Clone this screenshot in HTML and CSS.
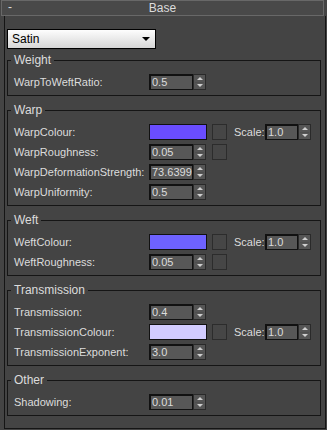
FILE: index.html
```html
<!DOCTYPE html>
<html lang="en">
<head>
  <meta charset="UTF-8" />
  <title>Base</title>
  <link rel="stylesheet" href="styles.css">
</head>
<body>
  <div class="rollout-head">
    <span class="toggle">-</span>
    <span class="title">Base</span>
  </div>
  <div class="rollout">
    <div class="dropdown">
      <span>Satin</span>
      <span class="caret"></span>
    </div>

    <div class="group">
      <span class="legend">Weight</span>
      <div class="row">
        <label>WarpToWeftRatio:</label>
        <div class="spin"><span class="field">0.5</span><span class="arrows"></span></div>
      </div>
    </div>

    <div class="group">
      <span class="legend">Warp</span>
      <div class="row">
        <label>WarpColour:</label>
        <span class="swatch" style="background:#6a4dff"></span>
        <span class="map"></span>
        <span class="scale">Scale:</span>
        <div class="spin small"><span class="field">1.0</span><span class="arrows"></span></div>
      </div>
      <div class="row">
        <label>WarpRoughness:</label>
        <div class="spin"><span class="field">0.05</span><span class="arrows"></span></div>
        <span class="map"></span>
      </div>
      <div class="row">
        <label>WarpDeformationStrength:</label>
        <div class="spin"><span class="field">73.6399</span><span class="arrows"></span></div>
      </div>
      <div class="row">
        <label>WarpUniformity:</label>
        <div class="spin"><span class="field">0.5</span><span class="arrows"></span></div>
      </div>
    </div>

    <div class="group">
      <span class="legend">Weft</span>
      <div class="row">
        <label>WeftColour:</label>
        <span class="swatch" style="background:#6e62ff"></span>
        <span class="map"></span>
        <span class="scale">Scale:</span>
        <div class="spin small"><span class="field">1.0</span><span class="arrows"></span></div>
      </div>
      <div class="row">
        <label>WeftRoughness:</label>
        <div class="spin"><span class="field">0.05</span><span class="arrows"></span></div>
        <span class="map"></span>
      </div>
    </div>

    <div class="group">
      <span class="legend">Transmission</span>
      <div class="row">
        <label>Transmission:</label>
        <div class="spin"><span class="field">0.4</span><span class="arrows"></span></div>
      </div>
      <div class="row">
        <label>TransmissionColour:</label>
        <span class="swatch" style="background:#d2ccff"></span>
        <span class="map"></span>
        <span class="scale">Scale:</span>
        <div class="spin small"><span class="field">1.0</span><span class="arrows"></span></div>
      </div>
      <div class="row">
        <label>TransmissionExponent:</label>
        <div class="spin"><span class="field">3.0</span><span class="arrows"></span></div>
      </div>
    </div>

    <div class="group">
      <span class="legend">Other</span>
      <div class="row">
        <label>Shadowing:</label>
        <div class="spin"><span class="field">0.01</span><span class="arrows"></span></div>
      </div>
    </div>
  </div>
</body>
</html>
```

FILE: styles.css
```css
:root {
  --bg: #444444;
  --text: #dcdcdc;
  --line: #151515;
  --font-main: 'Liberation Sans', Arial, sans-serif;
}

body {
  margin: 0;
  background: var(--bg);
  color: var(--text);
  font-family: var(--font-main);
  font-size: 11px;
  width: 327px;
  height: 430px;
  overflow: hidden;
}

.rollout-head {
  position: relative;
  margin-left: 1px;
  width: 321px;
  height: 14px;
  border: 1px solid #686868;
  background: #494949;
  display: flex;
  align-items: center;
  justify-content: center;
  font-size: 12px;
}

.rollout-head .toggle {
  position: absolute;
  left: 6px;
  top: -1px;
}

.rollout {
  margin-left: 4px;
  width: 322px;
  height: 413px;
  border: 1px solid var(--line);
  border-top: none;
  padding: 13px 4px 0 2px;
  box-sizing: border-box;
}

.dropdown {
  width: 149px;
  height: 20px;
  box-sizing: border-box;
  border: 1px solid #000;
  background: linear-gradient(#fdfdfd, #d6d6d6);
  color: #000;
  font-size: 12px;
  display: flex;
  align-items: center;
  justify-content: space-between;
  padding: 0 5px 0 4px;
}

.caret {
  width: 0;
  height: 0;
  border-left: 4px solid transparent;
  border-right: 4px solid transparent;
  border-top: 4px solid #000;
}

.group {
  position: relative;
  border: 1px solid var(--line);
  padding: 11px 0 3px 6px;
  margin-top: 14px;
}

.dropdown + .group {
  margin-top: 11px;
}

.legend {
  position: absolute;
  top: -8px;
  left: 3px;
  padding: 0 3px;
  background: var(--bg);
  font-size: 12px;
  line-height: 14px;
}

.row {
  height: 20px;
  display: flex;
  align-items: center;
}

.row label {
  width: 135px;
  flex: none;
}

.spin {
  display: flex;
  height: 16px;
}

.field {
  width: 44px;
  box-sizing: border-box;
  border: 1px solid #111;
  border-top-width: 2px;
  border-left-width: 2px;
  background: #575757;
  padding-left: 1px;
  line-height: 13px;
  font-size: 11px;
  white-space: nowrap;
  overflow: hidden;
}

.spin.small .field {
  width: 33px;
}

.arrows {
  width: 13px;
  box-sizing: border-box;
  border: 1px solid #2a2a2a;
  background:
    linear-gradient(#4e4e4e, #4e4e4e) center / 9px 1px no-repeat,
    #555;
  position: relative;
}

.arrows::before,
.arrows::after {
  content: "";
  position: absolute;
  left: 3px;
  border-left: 3px solid transparent;
  border-right: 3px solid transparent;
}

.arrows::before {
  top: 2px;
  border-bottom: 3px solid #cfcfcf;
}

.arrows::after {
  bottom: 2px;
  border-top: 3px solid #cfcfcf;
}

.swatch {
  width: 58px;
  height: 16px;
  box-sizing: border-box;
  border: 1px solid #111;
}

.map {
  width: 15px;
  height: 16px;
  box-sizing: border-box;
  border: 1px solid #2c2c2c;
  background: #464646;
  margin-left: 5px;
}

.spin + .map {
  margin-left: 6px;
}

.scale {
  margin-left: 7px;
  width: 31px;
}
```
